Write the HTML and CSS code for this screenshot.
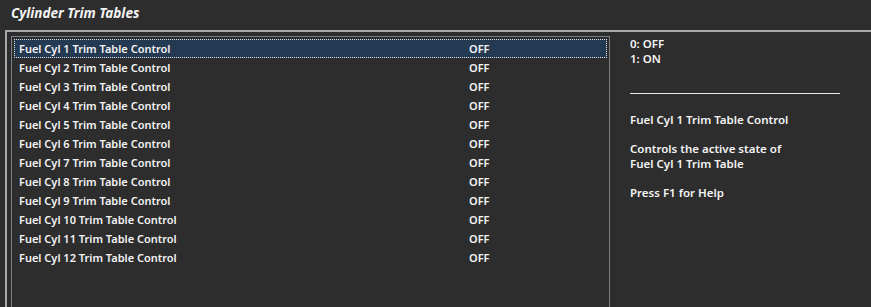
FILE: index.html
```html
<!DOCTYPE html>
<html lang="en">
<head>
  <meta charset="UTF-8">
  <title>Cylinder Trim Tables</title>
  <link rel="stylesheet" href="styles.css">
</head>
<body>

  <div class="title">Cylinder Trim Tables</div>

  <div class="frame">
    <div class="list">
      <div class="row selected"><span class="name">Fuel Cyl 1 Trim Table Control</span><span class="value">OFF</span></div>
      <div class="row"><span class="name">Fuel Cyl 2 Trim Table Control</span><span class="value">OFF</span></div>
      <div class="row"><span class="name">Fuel Cyl 3 Trim Table Control</span><span class="value">OFF</span></div>
      <div class="row"><span class="name">Fuel Cyl 4 Trim Table Control</span><span class="value">OFF</span></div>
      <div class="row"><span class="name">Fuel Cyl 5 Trim Table Control</span><span class="value">OFF</span></div>
      <div class="row"><span class="name">Fuel Cyl 6 Trim Table Control</span><span class="value">OFF</span></div>
      <div class="row"><span class="name">Fuel Cyl 7 Trim Table Control</span><span class="value">OFF</span></div>
      <div class="row"><span class="name">Fuel Cyl 8 Trim Table Control</span><span class="value">OFF</span></div>
      <div class="row"><span class="name">Fuel Cyl 9 Trim Table Control</span><span class="value">OFF</span></div>
      <div class="row"><span class="name">Fuel Cyl 10 Trim Table Control</span><span class="value">OFF</span></div>
      <div class="row"><span class="name">Fuel Cyl 11 Trim Table Control</span><span class="value">OFF</span></div>
      <div class="row"><span class="name">Fuel Cyl 12 Trim Table Control</span><span class="value">OFF</span></div>
    </div>

    <div class="info">
      <div class="options">0: OFF<br>1: ON</div>
      <div class="rule"></div>
      <p>Fuel Cyl 1 Trim Table Control</p>
      <p>Controls the active state of<br>Fuel Cyl 1 Trim Table</p>
      <p>Press F1 for Help</p>
    </div>
  </div>

</body>
</html>
```

FILE: styles.css
```css
body {
  margin: 0;
  height: 307px;
  overflow: hidden;
  background: #2d2d2d;
  color: #f4f4f4;
  font-family: "Noto Sans", "Open Sans", sans-serif;
  font-size: 11px;
  font-weight: 600;
}
.title {
  height: 30px;
  padding-left: 11px;
  line-height: 27px;
  font-size: 13.5px;
  font-weight: bold;
  font-style: italic;
}
.frame {
  display: flex;
  margin-left: 5px;
  height: 275px;
  overflow: hidden;
  border-top: 2px solid #a9a9a9;
  border-left: 2px solid #a9a9a9;
}
.list {
  width: 593px;
  margin: 4px 0 0 4px;
  padding: 2px 2px 0 2px;
  border: 1px solid #7c808a;
  border-bottom: none;
}
.row {
  display: flex;
  height: 19px;
  line-height: 17px;
  padding-left: 4px;
  box-sizing: border-box;
  border: 1px solid transparent;
}
.row.selected {
  background: #243a52;
  border: 1px dotted #e8e8e8;
}
.name {
  width: 450px;
}
.info {
  padding: 4px 0 0 20px;
  line-height: 15px;
  font-size: 11.5px;
}
.rule {
  width: 210px;
  height: 1px;
  background: #e8e8e8;
  margin: 27px 0 18px;
}
.info p {
  margin: 0 0 14px;
}
```
